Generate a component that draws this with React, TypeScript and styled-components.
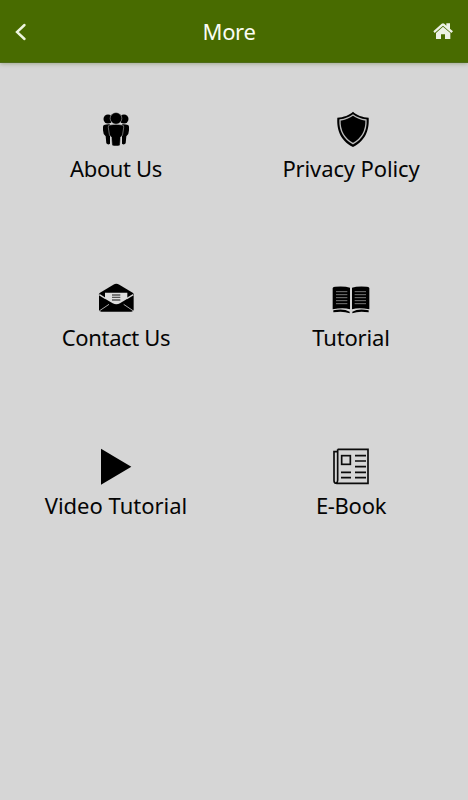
import React from 'react';
import styled, { createGlobalStyle } from 'styled-components';

const GlobalStyle = createGlobalStyle`
  * { box-sizing: border-box; }
  body { margin: 0; background: #d6d6d6; font-family: "Noto Sans", "Open Sans", sans-serif; }
`;

const Screen = styled.div`
  height: 800px;
  display: flex;
  flex-direction: column;
  overflow: hidden;
  background: #d6d6d6;
`;

const Header = styled.header`
  flex: none;
  height: 63px;
  padding: 0 14px;
  display: grid;
  grid-template-columns: 40px 1fr 40px;
  align-items: center;
  color: #fbfdf3;
  background: #486b00;
  border-bottom: 1px solid #4e6b19;
  box-shadow: 0 1px 4px rgba(70, 90, 20, 0.35);
`;

const Title = styled.h1`
  margin: 0;
  padding-right: 10px;
  text-align: center;
  font-size: 22px;
  font-weight: 400;
  line-height: 30px;
  letter-spacing: -0.35px;
`;

const HeaderButton = styled.button<{ $end?: boolean }>`
  display: flex;
  justify-content: ${(p) => (p.$end ? 'flex-end' : 'flex-start')};
  padding: 0;
  border: 0;
  color: inherit;
  background: none;
`;

const Menu = styled.nav`
  display: grid;
  grid-template-columns: 232px 236px;
  grid-template-rows: 169px 168px auto;
  padding-top: 42px;
`;

const Item = styled.a`
  display: flex;
  flex-direction: column;
  align-items: center;
  color: #050505;
  &:nth-child(even) { padding-left: 2px; }
`;

const Icon = styled.svg`
  flex: none;
  width: 52px;
  height: 45px;
  overflow: visible;
  fill: #000;
`;

const Label = styled.span<{ $tracking: number }>`
  margin-top: 3px;
  font-size: 22px;
  line-height: 30px;
  white-space: nowrap;
  letter-spacing: ${(p) => p.$tracking}px;
`;

const light = '#d6d6d6';

const People = () => (
  <Icon viewBox="0 0 156 135">
    <circle cx="54" cy="42" r="13.5" />
    <circle cx="102" cy="42" r="13.5" />
    <path d="M42 60Q50 57 60 58V116Q54 121 49 115L47 94Q39 88 39 76V66Q39 61 42 60Z" />
    <path d="M114 60Q106 57 96 58V116Q102 121 107 115L109 94Q117 88 117 76V66Q117 61 114 60Z" />
    <path
      d="M58 60Q78 55 98 60Q102 62 101 68L98 88Q97 94 92 96L90 119Q89 123 84 123H72Q67 123 66 119L64 96Q59 94 58 88L55 68Q54 62 58 60Z"
      stroke={light}
      strokeWidth="1.5"
    />
    <circle cx="78" cy="40" r="17.5" stroke={light} strokeWidth="1.5" />
  </Icon>
);

const Shield = () => (
  <Icon viewBox="0 0 156 135">
    <path d="M84 20C74 30 55 37 37 38C35 70 43 105 84 126C125 105 133 70 131 38C113 37 94 30 84 20Z" />
    <path
      d="M84 30C72 39 59 43 45 45C44 72 52 98 84 116C116 98 124 72 123 45C109 43 96 39 84 30Z"
      fill="none"
      stroke="#bcbcbc"
      strokeWidth="4"
    />
  </Icon>
);

const Envelope = () => (
  <Icon viewBox="0 -3 156 135">
    <path d="M27 58Q27 55 30 53L70 29Q79 24 88 29L128 53Q131 55 131 58V103Q131 110 124 110H34Q27 110 27 103Z" />
    <path d="M45 53H112V71L90 85Q79 91 68 85L45 71Z" fill="#dedede" />
    <path d="M28 59L47 71M130 59L110 71" stroke={light} strokeWidth="4" />
    <path d="M66 60H91M66 67H91M66 75H91" stroke="#555" strokeWidth="4" />
    <path d="M29 107L57 88M129 107L101 88" stroke="#aaa" strokeWidth="3" />
  </Icon>
);

const Book = () => (
  <Icon viewBox="0 -3 156 135">
    <path d="M23 39Q25 35 31 35Q61 33 75 38V103Q55 96 23 103Z" />
    <path d="M133 39Q131 35 125 35Q95 33 81 38V103Q101 96 133 103Z" />
    <path
      d="M33 50H67M33 59H67M33 68H67M33 77H67M33 86H67M89 50H123M89 59H123M89 68H123M89 77H123M89 86H123"
      fill="none"
      stroke="#777"
      strokeWidth="3"
    />
    <path d="M25 106Q55 99 74 110V115Q55 107 25 112ZM131 106Q101 99 82 110V115Q101 107 131 112Z" />
  </Icon>
);

const Play = () => (
  <Icon viewBox="0 -3 156 135">
    <path d="M33 17L124 71L33 125Z" />
  </Icon>
);

const Newspaper = () => (
  <Icon viewBox="0 -3 156 135">
    <g fill="none" stroke="#0b0b0b" strokeWidth="5">
      <path d="M38 19H129V121H36Q27 121 27 113V26H38" />
      <path d="M38 19V112Q38 119 33 121" />
      <rect x="50" y="38" width="26" height="26" />
      <path d="M90 38H123M90 54H123M90 71H123M90 88H123M90 104H123M48 88H78M48 104H78" />
    </g>
  </Icon>
);

const items = [
  { label: 'About Us', Glyph: People, tracking: -0.35 },
  { label: 'Privacy Policy', Glyph: Shield, tracking: -0.12 },
  { label: 'Contact Us', Glyph: Envelope, tracking: -0.35 },
  { label: 'Tutorial', Glyph: Book, tracking: -0.15 },
  { label: 'Video Tutorial', Glyph: Play, tracking: 0 },
  { label: 'E-Book', Glyph: Newspaper, tracking: -0.3 },
];

export default function App() {
  return (
    <>
      <GlobalStyle />
      <Screen>
        <Header>
          <HeaderButton aria-label="Back">
            <svg width="14" height="20" viewBox="0 0 14 20" fill="none">
              <path d="M10.5 4L3 11L10.5 18" stroke="#eef5df" strokeWidth="2.4" strokeLinecap="round" />
            </svg>
          </HeaderButton>
          <Title>More</Title>
          <HeaderButton $end aria-label="Home">
            <svg width="22" height="20" viewBox="0 0 66 60" fill="#edf1e6">
              <path d="M4 31L29 8Q33 5 37 8L43 14V7H54V23L63 31L58 36L33 14L8 36Z" />
              <path d="M33 17L55 36V54H39V40H27V54H12V36Z" />
            </svg>
          </HeaderButton>
        </Header>
        <Menu>
          {items.map(({ label, Glyph, tracking }) => (
            <Item key={label}>
              <Glyph />
              <Label $tracking={tracking}>{label}</Label>
            </Item>
          ))}
        </Menu>
      </Screen>
    </>
  );
}
